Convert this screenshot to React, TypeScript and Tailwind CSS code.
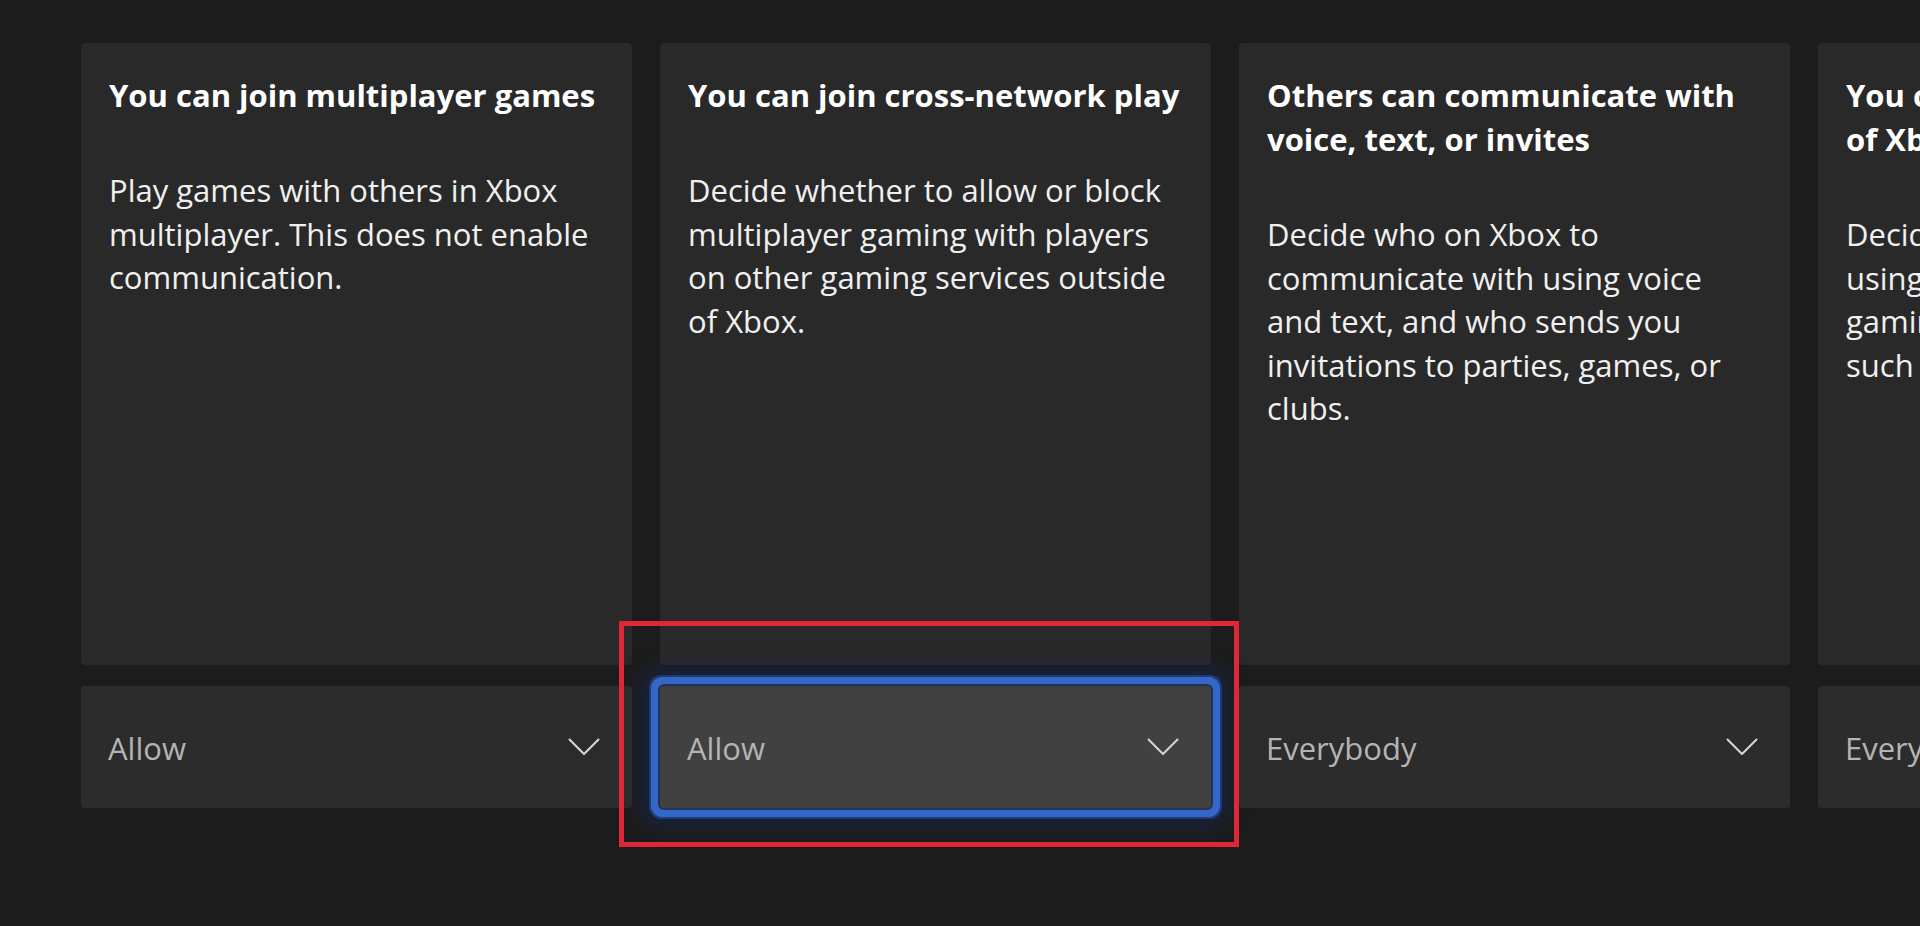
import React from "react";

type Col = {
  title: string;
  body: React.ReactNode;
  value: string;
  focused?: boolean;
};

const cols: Col[] = [
  {
    title: "You can join multiplayer games",
    body: "Play games with others in Xbox multiplayer. This does not enable communication.",
    value: "Allow",
  },
  {
    title: "You can join cross-network play",
    body: "Decide whether to allow or block multiplayer gaming with players on other gaming services outside of Xbox.",
    value: "Allow",
    focused: true,
  },
  {
    title: "Others can communicate with voice, text, or invites",
    body: "Decide who on Xbox to communicate with using voice and text, and who sends you invitations to parties, games, or clubs.",
    value: "Everybody",
  },
  {
    title: "You can communicate outside of Xbox with voice & text",
    body: (
      <>
        Decide who you can talk to
        <br />
        using voice and text on other
        <br />
        gaming services outside of Xbox,
        <br />
        such as PC and mobile.
      </>
    ),
    value: "Everybody",
  },
];

function Chevron() {
  return (
    <svg width="32" height="18" viewBox="0 0 32 18" fill="none" className="shrink-0">
      <polyline points="1.5,1.5 16,16 30.5,1.5" stroke="#d6d6d6" strokeWidth="2" strokeLinecap="round" strokeLinejoin="round" />
    </svg>
  );
}

export default function App() {
  return (
    <div className="h-[926px] w-full overflow-hidden bg-[#1c1c1c] font-['Open_Sans',sans-serif]">
      <div className="flex gap-[28px] pl-[81px] pt-[43px]">
        {cols.map((c, i) => (
          <div key={i} className="flex w-[551px] shrink-0 flex-col gap-[21px]">
            <div className="h-[622px] rounded-[4px] bg-[#292929] pl-[28px] pr-[28px] pt-[30px]">
              <h2 className="text-[31px] font-bold leading-[44px] text-white">{c.title}</h2>
              <p className="mt-[52px] text-[31px] leading-[43.5px] text-[#f0f0f0]">{c.body}</p>
            </div>
            <div className="relative">
              <div
                className={
                  c.focused
                    ? "flex h-[122px] items-center justify-between rounded-[4px] bg-[#414141] pl-[27px] pr-[32px] shadow-[0_0_0_2px_#22335a,0_0_0_9px_#3467c8,0_0_0_11px_#1f3a75,0_0_20px_16px_rgba(20,40,95,0.6)]"
                    : "flex h-[122px] items-center justify-between rounded-[4px] bg-[#2c2c2c] pl-[27px] pr-[32px]"
                }
              >
                <span className="pt-[3px] text-[31px] text-[#b4b4b4]">{c.value}</span>
                <Chevron />
              </div>
              {c.focused && (
                <div className="pointer-events-none absolute -left-[41px] -right-[28px] -top-[65px] -bottom-[39px] border-[5px] border-[#e1263a]" />
              )}
            </div>
          </div>
        ))}
      </div>
    </div>
  );
}
